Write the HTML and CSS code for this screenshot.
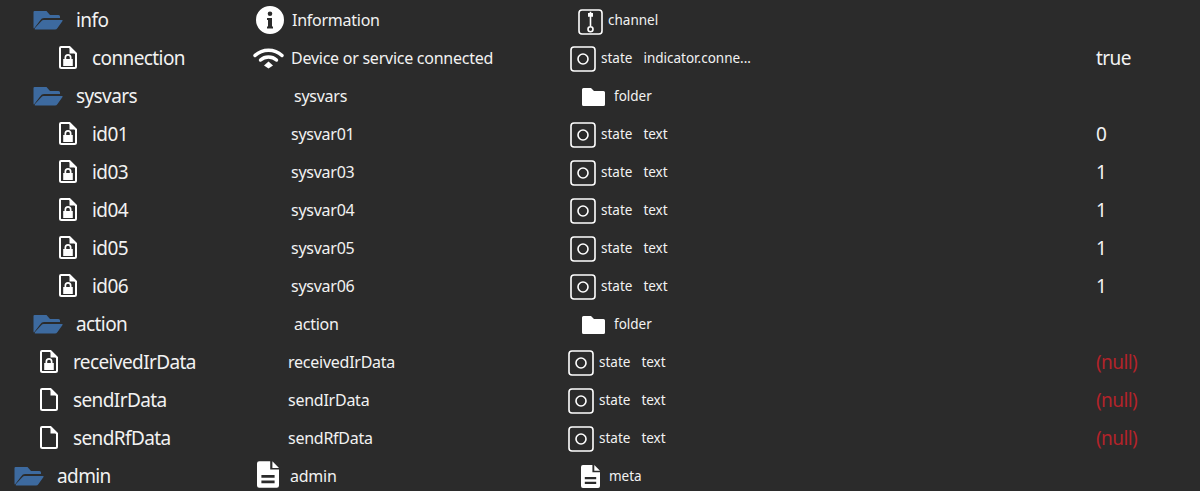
FILE: index.html
```html
<!DOCTYPE html>
<html lang="en">
<head>
<meta charset="utf-8">
<title>Objects</title>
<link rel="stylesheet" href="styles.css">
</head>
<body>
<svg class="defs" aria-hidden="true">
  <symbol id="i-open" class="blue" viewBox="0 0 30 20">
    <path d="M1.500 1H13.500L17 5H25.500Q27 5 27 6.500V8H11Q8.500 8 7.500 10L1 18.500Q.5 18.500 .5 17.500V2Q.5 1 1.500 1Z"/>
    <path d="M10.500 10H29Q30 10 29.500 11L24.500 18Q23.500 19.500 22 19.500H2.500Q1 19.500 2 18L8.500 11Q9.300 10 10.500 10Z"/>
  </symbol>
  <symbol id="i-lock" viewBox="0 0 18 23">
    <path class="line" d="M2 1H10.500L17 7.500V20.500Q17 22 15.500 22H2.500Q1 22 1 20.500V2Q1 1 2 1Z"/>
    <path d="M10.500 1.500L16.500 7.500H10.500Z"/>
    <path fill-rule="evenodd" d="M4.200 13H5.500V11.500A3.500 3.500 0 0 1 12.500 11.500V13H13.800V20H4.200ZM7.200 13H10.800V11.500A1.800 1.800 0 0 0 7.200 11.500Z"/>
  </symbol>
  <symbol id="i-file" viewBox="0 0 18 23">
    <path class="line" d="M2 1H10.500L17 7.500V20.500Q17 22 15.500 22H2.500Q1 22 1 20.500V2Q1 1 2 1Z"/>
    <path d="M10.500 1.500L16.500 7.500H10.500Z"/>
  </symbol>
  <symbol id="i-info" viewBox="0 0 28 28">
    <path fill-rule="evenodd" d="M14 0A14 14 0 1 1 14 28A14 14 0 1 1 14 0ZM14 5.500A2.300 2.300 0 1 0 14 10.100A2.300 2.300 0 1 0 14 5.500ZM11 12V14H12V20.500H11V22.500H17V20.500H16V12Z"/>
  </symbol>
  <symbol id="i-wifi" viewBox="0 0 31 22">
    <path class="wave" d="M2 8.500C9.500 1.500 21.500 1.500 29 8.500"/>
    <path class="wave" d="M7.500 13C12 9 19 9 23.500 13"/>
    <path d="M15.500 14.500L20 18.500L15.500 21.500L11 18.500Z"/>
  </symbol>
  <symbol id="i-state" viewBox="0 0 26 26">
    <rect class="thin" x="1" y="1" width="24" height="24" rx="3"/>
    <circle class="thin" cx="13" cy="13" r="5"/>
  </symbol>
  <symbol id="i-channel" viewBox="0 0 25 26">
    <rect class="thin" x="1" y="1" width="23" height="24" rx="3"/>
    <path d="M11.700 2.700H13.300V4H15V7.700H13.300V17H11.700V7.700H10V4H11.700Z"/>
    <circle class="thin" cx="12.500" cy="20.300" r="2.500"/>
  </symbol>
  <symbol id="i-folder" viewBox="0 0 23 18">
    <path d="M1.500 0H9L12 3H21.500Q23 3 23 4.500V16.500Q23 18 21.500 18H1.500Q0 18 0 16.500V1.500Q0 0 1.500 0Z"/>
  </symbol>
  <symbol id="i-meta" viewBox="0 0 20 24">
    <path fill-rule="evenodd" d="M2 0H12V7.500H20V22Q20 24 18 24H2Q0 24 0 22V2Q0 0 2 0ZM14 0L20 6H14ZM4 12.500V15H16V12.500ZM4 17.500V20H16V17.500Z"/>
  </symbol>
</svg>

<main class="tree">
  <div class="row lvl-info r-info">
    <span class="name"><svg class="ico-open"><use href="#i-open"/></svg><span>info</span></span>
    <span class="title"><svg class="ico-info"><use href="#i-info"/></svg><span>Information</span></span>
    <span class="role"><svg class="ico-channel"><use href="#i-channel"/></svg><span>channel</span></span>
    <span class="val"></span>
  </div>
  <div class="row lvl-child r-conn">
    <span class="name"><svg class="ico-doc"><use href="#i-lock"/></svg><span>connection</span></span>
    <span class="title"><svg class="ico-wifi"><use href="#i-wifi"/></svg><span>Device or service connected</span></span>
    <span class="role"><svg class="ico-state"><use href="#i-state"/></svg><span class="kind">state</span><span>indicator.conne...</span></span>
    <span class="val">true</span>
  </div>
  <div class="row lvl-info r-folder">
    <span class="name"><svg class="ico-open"><use href="#i-open"/></svg><span>sysvars</span></span>
    <span class="title">sysvars</span>
    <span class="role"><svg class="ico-folder"><use href="#i-folder"/></svg><span>folder</span></span>
    <span class="val"></span>
  </div>
  <div class="row lvl-child r-var">
    <span class="name"><svg class="ico-doc"><use href="#i-lock"/></svg><span>id01</span></span>
    <span class="title">sysvar01</span>
    <span class="role"><svg class="ico-state"><use href="#i-state"/></svg><span class="kind">state</span><span>text</span></span>
    <span class="val">0</span>
  </div>
  <div class="row lvl-child r-var">
    <span class="name"><svg class="ico-doc"><use href="#i-lock"/></svg><span>id03</span></span>
    <span class="title">sysvar03</span>
    <span class="role"><svg class="ico-state"><use href="#i-state"/></svg><span class="kind">state</span><span>text</span></span>
    <span class="val">1</span>
  </div>
  <div class="row lvl-child r-var">
    <span class="name"><svg class="ico-doc"><use href="#i-lock"/></svg><span>id04</span></span>
    <span class="title">sysvar04</span>
    <span class="role"><svg class="ico-state"><use href="#i-state"/></svg><span class="kind">state</span><span>text</span></span>
    <span class="val">1</span>
  </div>
  <div class="row lvl-child r-var">
    <span class="name"><svg class="ico-doc"><use href="#i-lock"/></svg><span>id05</span></span>
    <span class="title">sysvar05</span>
    <span class="role"><svg class="ico-state"><use href="#i-state"/></svg><span class="kind">state</span><span>text</span></span>
    <span class="val">1</span>
  </div>
  <div class="row lvl-child r-var">
    <span class="name"><svg class="ico-doc"><use href="#i-lock"/></svg><span>id06</span></span>
    <span class="title">sysvar06</span>
    <span class="role"><svg class="ico-state"><use href="#i-state"/></svg><span class="kind">state</span><span>text</span></span>
    <span class="val">1</span>
  </div>
  <div class="row lvl-info r-folder">
    <span class="name"><svg class="ico-open"><use href="#i-open"/></svg><span>action</span></span>
    <span class="title">action</span>
    <span class="role"><svg class="ico-folder"><use href="#i-folder"/></svg><span>folder</span></span>
    <span class="val"></span>
  </div>
  <div class="row lvl-action r-recv">
    <span class="name"><svg class="ico-doc"><use href="#i-lock"/></svg><span>receivedIrData</span></span>
    <span class="title">receivedIrData</span>
    <span class="role"><svg class="ico-state"><use href="#i-state"/></svg><span class="kind">state</span><span>text</span></span>
    <span class="val null">(null)</span>
  </div>
  <div class="row lvl-action r-recv">
    <span class="name"><svg class="ico-doc"><use href="#i-file"/></svg><span>sendIrData</span></span>
    <span class="title">sendIrData</span>
    <span class="role"><svg class="ico-state"><use href="#i-state"/></svg><span class="kind">state</span><span>text</span></span>
    <span class="val null">(null)</span>
  </div>
  <div class="row lvl-action r-recv">
    <span class="name"><svg class="ico-doc"><use href="#i-file"/></svg><span>sendRfData</span></span>
    <span class="title">sendRfData</span>
    <span class="role"><svg class="ico-state"><use href="#i-state"/></svg><span class="kind">state</span><span>text</span></span>
    <span class="val null">(null)</span>
  </div>
  <div class="row lvl-root r-admin">
    <span class="name"><svg class="ico-open"><use href="#i-open"/></svg><span>admin</span></span>
    <span class="title"><svg class="ico-meta"><use href="#i-meta"/></svg><span>admin</span></span>
    <span class="role"><svg class="ico-meta-sm"><use href="#i-meta"/></svg><span>meta</span></span>
    <span class="val"></span>
  </div>
</main>
</body>
</html>
```

FILE: styles.css
```css
html, body {
  margin: 0;
  height: 100%;
  overflow: hidden;
  background: #2b2b2b;
}

.defs {
  display: none;
}

symbol {
  fill: #fff;
}

symbol.blue {
  fill: #3d6a9f;
}

.line {
  fill: none;
  stroke: #fff;
  stroke-width: 2;
}

.thin {
  fill: none;
  stroke: #fff;
  stroke-width: 1.6;
}

.wave {
  fill: none;
  stroke: #fff;
  stroke-width: 3.4;
  stroke-linecap: round;
}

.tree {
  padding-top: 1px;
  font-family: "Noto Sans", "Open Sans", sans-serif;
  color: #f2f2f2;
}

.row {
  --pad: 33px;
  --tx: 291px;
  --rx: 570px;
  display: grid;
  grid-template-columns: calc(var(--tx) - var(--pad)) calc(var(--rx) - var(--tx)) 1fr 104px;
  height: 38px;
  padding-left: var(--pad);
  align-items: center;
}

.lvl-root { --pad: 14px; }
.lvl-info { --pad: 33px; }
.lvl-child { --pad: 59px; }
.lvl-action { --pad: 40px; }

.r-info { --tx: 256px; --rx: 578px; }
.r-conn { --tx: 253px; --rx: 570px; }
.r-folder { --tx: 294px; --rx: 582px; }
.r-var { --tx: 291px; --rx: 570px; }
.r-recv { --tx: 288px; --rx: 568px; }
.r-admin { --tx: 257px; --rx: 581px; }

.name, .title, .role {
  display: flex;
  align-items: center;
  white-space: nowrap;
}

.name {
  font-size: 19px;
  letter-spacing: -0.6px;
}

.title {
  font-size: 16px;
  letter-spacing: -0.25px;
}

.role {
  font-size: 13.5px;
}

.val {
  font-size: 19px;
  letter-spacing: -0.6px;
}

.null {
  color: #b3232a;
}

.kind {
  margin-right: 11px;
}

svg {
  flex: none;
}

.ico-open {
  width: 30px;
  height: 20px;
  margin-right: 13px;
}

.ico-doc {
  width: 18px;
  height: 23px;
  margin-right: 15px;
  margin-bottom: 2px;
}

.ico-info {
  width: 28px;
  height: 28px;
  margin-right: 8px;
}

.ico-wifi {
  width: 31px;
  height: 22px;
  margin-right: 7px;
}

.ico-state {
  width: 26px;
  height: 26px;
  margin-right: 5px;
  margin-top: 2px;
}

.ico-channel {
  width: 25px;
  height: 26px;
  margin-right: 5px;
  margin-top: 3px;
}

.ico-folder {
  width: 23px;
  height: 18px;
  margin-right: 9px;
  margin-top: 2px;
}

.ico-meta {
  width: 22px;
  height: 27px;
  margin-right: 11px;
  margin-bottom: 3px;
}

.ico-meta-sm {
  width: 19px;
  height: 23px;
  margin-right: 9px;
}
```
